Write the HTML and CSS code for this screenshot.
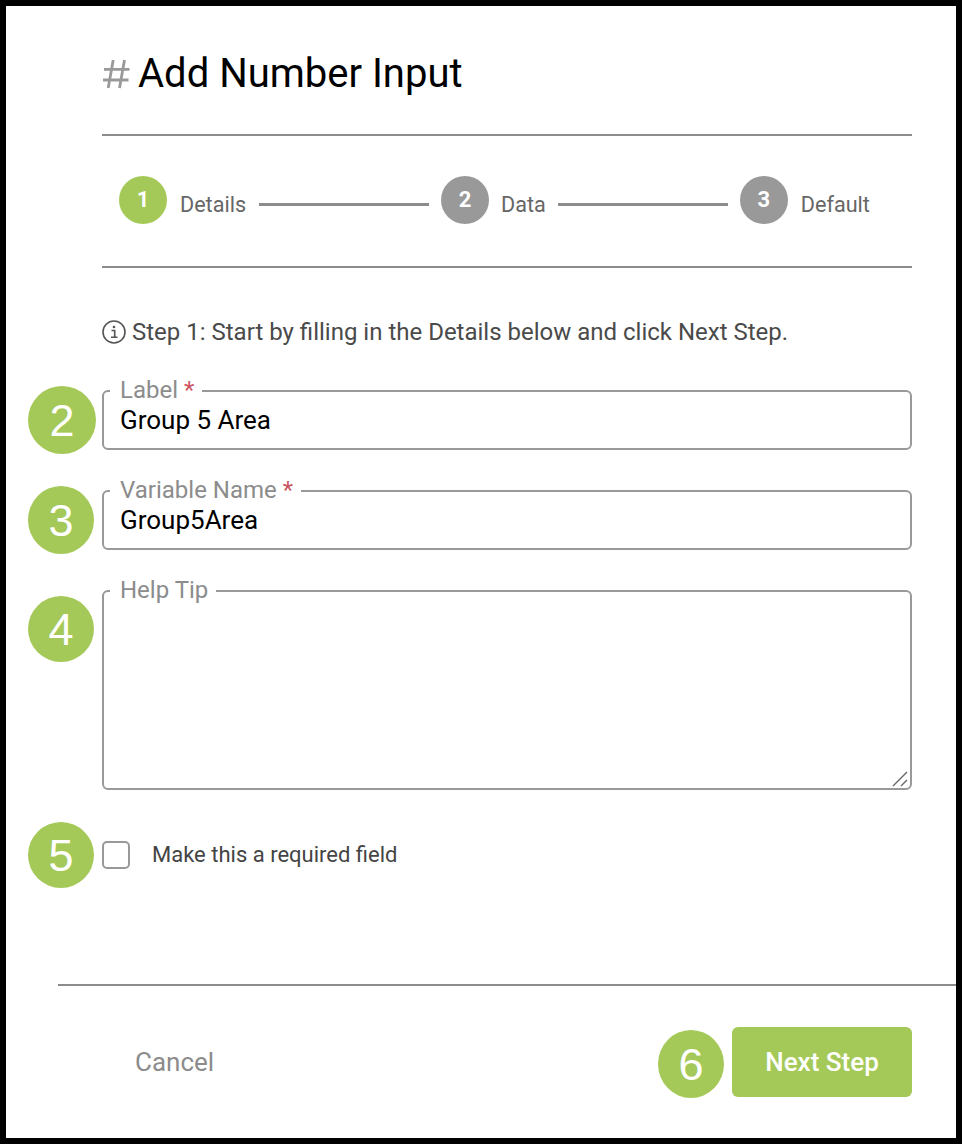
FILE: index.html
```html
<!DOCTYPE html>
<html lang="en">
<head>
<meta charset="utf-8">
<title>Add Number Input</title>
<link rel="stylesheet" href="styles.css">
</head>
<body>
<main class="frame">
  <div class="content">
    <h1 class="title">
      <svg class="hash" width="28" height="32" viewBox="0 0 28 32" aria-hidden="true"><path d="M11.2 2 6.2 30M22.5 2 17.5 30M2 11.3H27.5M1 22H26.5" fill="none" stroke="#999" stroke-width="2.8"/></svg>
      <span>Add Number Input</span>
    </h1>
    <ol class="steps">
      <li class="step step-active"><span class="step-num">1</span><span class="step-name">Details</span></li>
      <li class="step-line"></li>
      <li class="step step-mid"><span class="step-num">2</span><span class="step-name">Data</span></li>
      <li class="step-line"></li>
      <li class="step"><span class="step-num">3</span><span class="step-name">Default</span></li>
    </ol>
    <p class="info">
      <svg class="info-icon" width="24" height="24" viewBox="0 0 24 24" aria-hidden="true"><circle cx="12" cy="12" r="11" fill="none" stroke="#555" stroke-width="1.6"/><path d="M9.5 10.5H12.7V17M9 17.3H15.5" fill="none" stroke="#555" stroke-width="1.6"/><circle cx="12" cy="7" r="1.3" fill="#555"/></svg>
      <span>Step 1: Start by filling in the Details below and click Next Step.</span>
    </p>
    <fieldset class="field">
      <legend class="field-label">Label <em class="req">*</em></legend>
      <div class="field-value">Group 5 Area</div>
    </fieldset>
    <fieldset class="field">
      <legend class="field-label">Variable Name <em class="req">*</em></legend>
      <div class="field-value">Group5Area</div>
    </fieldset>
    <fieldset class="field field-area">
      <legend class="field-label">Help Tip</legend>
      <div class="area-body">
        <svg class="grip" width="16" height="16" viewBox="0 0 16 16" aria-hidden="true"><path d="M1 15 15 1M9 15 15 9" fill="none" stroke="#666" stroke-width="1.4"/></svg>
      </div>
    </fieldset>
    <label class="check">
      <span class="check-box"></span>
      <span>Make this a required field</span>
    </label>
  </div>
  <footer class="footer">
    <span class="cancel">Cancel</span>
    <button class="next" type="button">Next Step</button>
  </footer>
  <span class="badge badge-2">2</span>
  <span class="badge badge-3">3</span>
  <span class="badge badge-4">4</span>
  <span class="badge badge-5">5</span>
  <span class="badge badge-6">6</span>
</main>
</body>
</html>
```

FILE: styles.css
```css
* { box-sizing: border-box; }
html, body { margin: 0; padding: 0; }
body { width: 962px; height: 1144px; overflow: hidden; background: #000; font-family: Roboto, "Liberation Sans", sans-serif; }
.frame { position: relative; width: 962px; height: 1144px; border: 6px solid #000; background: #fff; display: flex; flex-direction: column; }
.content { flex: 1; padding: 0 44px 0 96px; display: flex; flex-direction: column; }
.title { margin: 0; height: 130px; padding-top: 45px; border-bottom: 2px solid #8c8c8c; display: flex; align-items: flex-start; gap: 8px; font-size: 40px; font-weight: 400; line-height: 46px; color: #000; }
.hash { margin-top: 7px; flex: none; }
.steps { list-style: none; margin: 0; padding: 0 0 2px 17px; height: 132px; border-bottom: 2px solid #8c8c8c; display: flex; align-items: center; }
.step { display: flex; align-items: center; gap: 13px; }
.step-mid { gap: 12px; margin-right: -1px; }
.step-num { width: 48px; height: 48px; border-radius: 50%; background: #999; color: #fff; font-size: 22px; font-weight: 700; padding-bottom: 2px; display: flex; align-items: center; justify-content: center; }
.step-active .step-num { background: #a5c958; }
.step-name { font-size: 21.6px; line-height: 24px; color: #666; padding-top: 9px; }
.step-line { width: 170px; height: 3px; background: #8c8c8c; margin: 9px 12px 0 13px; }
.info { margin: 51px 0 0; height: 26px; display: flex; align-items: center; gap: 6px; font-size: 24px; line-height: 26px; color: #4a4a4a; }
.info-icon { flex: none; }
.field { margin: 0 0 40px; padding: 0 16px; width: 810px; height: 60px; border: 2px solid #999; border-radius: 6px; min-inline-size: 0; }
.info + .field { margin-top: 45px; }
.field-label { height: 2px; padding: 0 8px 0 10px; margin-left: -10px; font-size: 24px; line-height: 0; color: #8c8c8c; }
.req { font-style: normal; color: #c9545f; }
.field-value { font-size: 26px; line-height: 28px; color: #000; margin-top: 14px; }
.field-area { height: 200px; margin-bottom: 51px; }
.area-body { height: 196px; display: flex; align-items: flex-end; justify-content: flex-end; }
.grip { margin: 0 -14px 1px 0; }
.check { display: flex; align-items: center; gap: 22px; font-size: 22px; line-height: 28px; color: #444; }
.check-box { width: 28px; height: 28px; border: 2px solid #999; border-radius: 5px; flex: none; }
.footer { margin-left: 52px; height: 154px; border-top: 2px solid #8c8c8c; padding: 41px 44px 0 77px; display: flex; align-items: flex-start; justify-content: space-between; }
.cancel { font-size: 26px; font-weight: 400; line-height: 70px; color: #8c8c8c; }
.next { width: 180px; height: 70px; border: 0; border-radius: 6px; background: #a5c958; color: #fff; font-family: inherit; font-size: 26px; font-weight: 500; padding: 0; }
.badge { position: absolute; width: 66px; height: 66px; border-radius: 50%; background: #a5c958; color: #fff; font-family: "Liberation Sans", Arial, sans-serif; font-size: 45px; padding-top: 2px; display: flex; align-items: center; justify-content: center; }
.badge-2 { left: 22px; top: 380px; width: 68px; height: 68px; }
.badge-3 { left: 22px; top: 480px; height: 68px; }
.badge-4 { left: 22px; top: 590px; }
.badge-5 { left: 22px; top: 816px; }
.badge-6 { left: 652px; top: 1024px; height: 68px; }
```
